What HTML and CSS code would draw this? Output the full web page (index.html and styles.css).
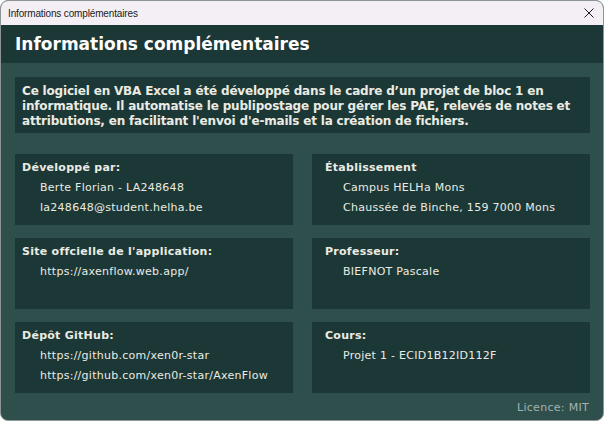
FILE: index.html
```html
<!DOCTYPE html>
<html lang="fr">
<head>
<meta charset="utf-8">
<title>Informations complémentaires</title>
<link rel="stylesheet" href="styles.css">
</head>
<body>
<div class="window">
  <div class="titlebar">
    <span class="titlebar-text">Informations complémentaires</span>
    <svg class="close" width="10" height="10" viewBox="0 0 10 10"><path d="M0.5 0.5 L9.5 9.5 M9.5 0.5 L0.5 9.5" stroke="#1a1a1a" stroke-width="1" fill="none"/></svg>
  </div>
  <div class="header">Informations complémentaires</div>
  <div class="main">
    <div class="desc">Ce logiciel en VBA Excel a été développé dans le cadre d’un projet de bloc 1 en informatique. Il automatise le publipostage pour gérer les PAE, relevés de notes et attributions, en facilitant l'envoi d'e-mails et la création de fichiers.</div>
    <div class="cards">
      <div class="card">
        <div class="card-title">Développé par:</div>
        <div class="item">Berte Florian - LA248648</div>
        <div class="item">la248648@student.helha.be</div>
      </div>
      <div class="card card-right">
        <div class="card-title">Établissement</div>
        <div class="item">Campus HELHa Mons</div>
        <div class="item">Chaussée de Binche, 159 7000 Mons</div>
      </div>
      <div class="card">
        <div class="card-title">Site offcielle de l'application:</div>
        <div class="item">https://axenflow.web.app/</div>
      </div>
      <div class="card card-right">
        <div class="card-title">Professeur:</div>
        <div class="item">BIEFNOT Pascale</div>
      </div>
      <div class="card">
        <div class="card-title">Dépôt GitHub:</div>
        <div class="item">https://github.com/xen0r-star</div>
        <div class="item">https://github.com/xen0r-star/AxenFlow</div>
      </div>
      <div class="card card-right">
        <div class="card-title">Cours:</div>
        <div class="item">Projet 1 - ECID1B12ID112F</div>
      </div>
    </div>
    <div class="licence">Licence: MIT</div>
  </div>
</div>
</body>
</html>
```
FILE: styles.css
```css
html, body {
  margin: 0;
  padding: 0;
  background: #ffffff;
}
.window {
  width: 602px;
  height: 419px;
  border: 1px solid #8e9695;
  border-radius: 8px;
  overflow: hidden;
  background: #2e4f4c;
  display: flex;
  flex-direction: column;
}
.titlebar {
  height: 24px;
  background: #f4eff5;
  display: flex;
  align-items: center;
  justify-content: space-between;
  padding: 0 9px 0 7px;
  flex: none;
}
.titlebar-text {
  font-family: "Liberation Sans", Arial, sans-serif;
  font-size: 10px;
  letter-spacing: -0.15px;
  color: #1a1a1a;
}
.close {
  display: block;
}
.header {
  height: 38px;
  flex: none;
  background: #1c3836;
  color: #ffffff;
  font-family: "DejaVu Sans", Verdana, sans-serif;
  font-weight: bold;
  font-size: 17px;
  line-height: 38px;
  padding-left: 14px;
}
.main {
  padding: 14px 13px 0 14px;
  font-family: "DejaVu Sans", Verdana, sans-serif;
  color: #ebebe3;
}
.desc {
  background: #1c3836;
  padding: 7px 7px 4px 7px;
  font-size: 12px;
  letter-spacing: -0.18px;
  font-weight: bold;
  line-height: 15px;
  height: 45px;
}
.cards {
  margin-top: 21px;
  display: grid;
  grid-template-columns: 278px 278px;
  justify-content: space-between;
  grid-auto-rows: 71px;
  row-gap: 13px;
}
.card {
  background: #1c3836;
  padding: 4px 7px 0 7px;
  font-size: 11px;
  letter-spacing: 0.27px;
}
.card-right {
  padding-left: 13px;
}
.card-title {
  font-weight: bold;
  line-height: 20px;
}
.item {
  line-height: 20px;
  padding-left: 18px;
}
.licence {
  text-align: right;
  font-size: 11px;
  letter-spacing: 0.3px;
  color: #a3b3b1;
  margin-top: 8px;
  line-height: 14px;
  padding-right: 1px;
}
```
